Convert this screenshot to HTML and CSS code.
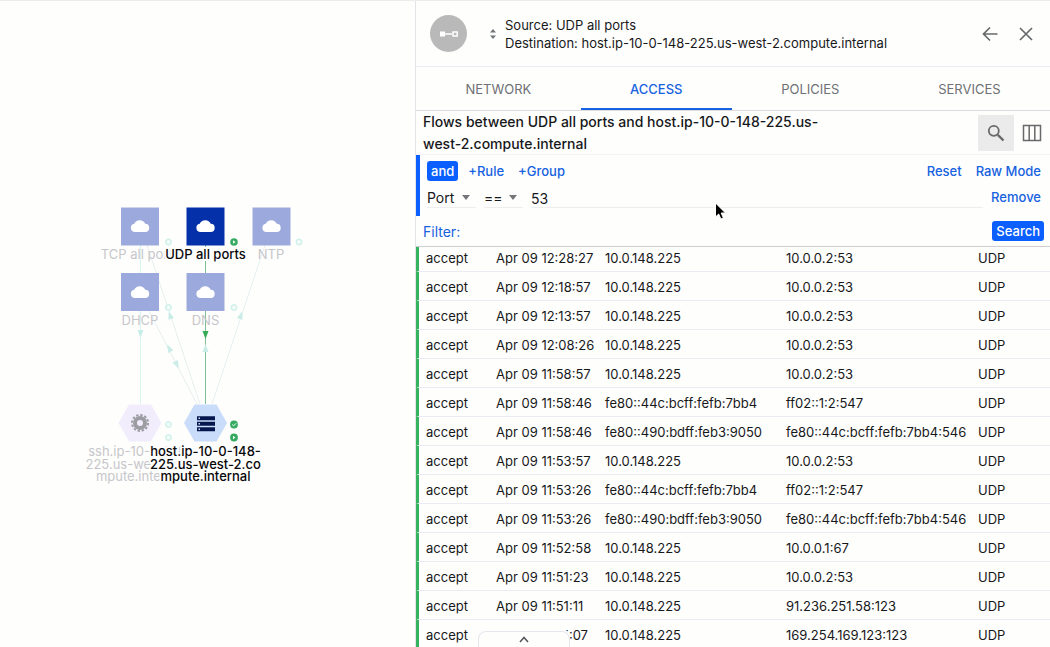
FILE: index.html
```
<!DOCTYPE html>
<html lang="en">
<head>
<meta charset="utf-8">
<title>Flows</title>
<link rel="stylesheet" href="styles.css">
</head>
<body>
<div class="app">
  <main class="canvas">
    <svg class="graph" role="img" aria-label="Service graph">
      <defs>
        <g id="cloud"><path d="M-5 6a4.200 4.200 0 0 1-.8-8.300A6 6 0 0 1 5.200-2.200 4.100 4.100 0 0 1 5 6z" fill="#fff"/></g>
        <path id="up" d="M0-4 3 4h-6z"/>
        <path id="down" d="M0 4 3-4h-6z"/>
        <circle id="ring" r="2.700"/>
      </defs>
      <g class="edges">
        <path d="M140.500 245V404" class="edge edge-teal"/>
        <path d="M147 245 200 404M149 311 197 404M265 245 212 404" class="edge"/>
        <path d="M205.500 245V404" class="edge edge-green"/>
      </g>
      <g class="arrows">
        <use href="#down" x="140.500" y="334"/>
        <use href="#up" transform="translate(170 315) rotate(-18)"/>
        <use href="#up" transform="translate(169 348) rotate(-27)"/>
        <use href="#down" transform="translate(177 365) rotate(-27)"/>
        <use href="#up" transform="translate(241 315) rotate(18)"/>
        <use href="#up" x="205.500" y="348"/>
      </g>
      <use href="#down" x="205.500" y="335" class="arrow-green"/>
      <g class="faded-box">
        <rect x="121" y="207.500" width="38" height="38"/>
        <rect x="252.500" y="207.500" width="38" height="38"/>
        <rect x="121" y="273" width="38" height="38"/>
        <rect x="186.500" y="273" width="38" height="38"/>
      </g>
      <rect x="186.500" y="207.500" width="38" height="38" class="active-box"/>
      <use href="#cloud" x="140" y="226"/>
      <use href="#cloud" x="205.500" y="226"/>
      <use href="#cloud" x="271.500" y="226"/>
      <use href="#cloud" x="140" y="292"/>
      <use href="#cloud" x="205.500" y="292"/>
      <path d="M118.500 423 129 404.500H151L161.500 423 151 441.500H129z" class="hex-faded"/>
      <path d="M184 423 194.500 404.500H216.500L227 423 216.500 441.500H194.500z" class="hex-active"/>
      <circle cx="140" cy="423" r="5" class="gear"/>
      <circle cx="140" cy="423" r="8" class="teeth"/>
      <path d="M197 416.300h18v4h-18zM197 421.800h18v4h-18zM197 427.300h18v4h-18z" fill="#06164e"/>
      <path d="M198.500 417.500h1.500v1.500h-1.500zM198.500 423h1.500v1.500h-1.500zM198.500 428.500h1.500v1.500h-1.500z" fill="#cfe0fb"/>
      <g class="rings">
        <use href="#ring" x="168.500" y="242"/><use href="#ring" x="299" y="242"/>
        <use href="#ring" x="168.500" y="307.500"/><use href="#ring" x="234" y="307.500"/>
        <use href="#ring" x="168.500" y="424.500"/><use href="#ring" x="168.500" y="437.500"/>
      </g>
      <g fill="#35ab62">
        <circle cx="234" cy="242" r="3.800"/><circle cx="234" cy="424.500" r="3.900"/><circle cx="234" cy="437.500" r="3.900"/>
      </g>
      <path d="M233 240.300v3.400l2.500-1.700zM233 435.800v3.400l2.500-1.700z" fill="#fff"/>
      <path d="M232.200 424.500l1.400 1.400 2.500-2.600" fill="none" stroke="#fff"/>
      <g class="label label-faded">
        <text x="140" y="259">TCP all ports</text>
        <text x="271" y="259">NTP</text>
        <text x="140" y="325">DHCP</text>
        <text x="205.500" y="325">DNS</text>
        <text><tspan x="140" y="456">ssh.ip-10-0-148-</tspan><tspan x="140" y="469">225.us-west-2.co</tspan><tspan x="140" y="481">mpute.internal</tspan></text>
      </g>
      <g class="label label-active">
        <text x="205.500" y="259">UDP all ports</text>
        <text><tspan x="205.500" y="456">host.ip-10-0-148-</tspan><tspan x="205.500" y="469">225.us-west-2.co</tspan><tspan x="205.500" y="481">mpute.internal</tspan></text>
      </g>
    </svg>
  </main>

  <aside class="panel">
    <header class="header">
      <span class="avatar">
        <svg width="20" height="8" viewBox="0 0 20 8"><path d="M1 1.500h5v5H1zM6 3.300h7v1.400H6z" fill="#fff"/><path d="M14 2h4.200v4H14z" fill="none" stroke="#fff" stroke-width="1.500"/></svg>
      </span>
      <button class="icon-btn swap" aria-label="Swap source and destination">
        <svg width="8" height="12" viewBox="0 0 8 12"><path d="M4 1 7 4.500H1zM4 11 1 7.500h6z" fill="#707479"/></svg>
      </button>
      <div class="endpoints">
        <div>Source: UDP all ports</div>
        <div>Destination: host.ip-10-0-148-225.us-west-2.compute.internal</div>
      </div>
      <button class="icon-btn" aria-label="Back">
        <svg width="16" height="16" viewBox="0 0 16 16"><path d="M15.500 8H1.500M8 1.500 1.500 8 8 14.500" class="stroke"/></svg>
      </button>
      <button class="icon-btn" aria-label="Close">
        <svg width="16" height="16" viewBox="0 0 16 16"><path d="M2 2 14 14M14 2 2 14" class="stroke"/></svg>
      </button>
    </header>

    <nav class="tabs" role="tablist">
      <button class="tab" role="tab">NETWORK</button>
      <button class="tab tab-on" role="tab" aria-selected="true">ACCESS</button>
      <button class="tab" role="tab">POLICIES</button>
      <button class="tab" role="tab">SERVICES</button>
    </nav>

    <section class="title-row">
      <h1 class="title">Flows between UDP all ports and host.ip-10-0-148-225.us-west-2.compute.internal</h1>
      <button class="icon-btn search-toggle" aria-label="Toggle search">
        <svg width="18" height="18" viewBox="0 0 18 18"><circle cx="6.800" cy="6.800" r="5" fill="none" stroke="#68696b" stroke-width="1.800"/><path d="M10.800 10.800 16.500 16.500" stroke="#68696b" stroke-width="2.400"/></svg>
      </button>
      <button class="icon-btn" aria-label="Columns">
        <svg width="20" height="18" viewBox="0 0 20 18"><path d="M1.500 1.500h17v15h-17zM7.200 1.500V16.500M12.800 1.500V16.500" fill="none" stroke="#68696b" stroke-width="1.500"/></svg>
      </button>
    </section>

    <form class="query" onsubmit="return false">
      <div class="rules">
        <div class="rule-line">
          <button class="solid" type="button">and</button>
          <button class="link" type="button">+Rule</button>
          <button class="link" type="button">+Group</button>
          <span class="spacer"></span>
          <button class="link" type="button">Reset</button>
          <button class="link" type="button">Raw Mode</button>
        </div>
        <div class="rule-line rule-fields">
          <span class="pick pick-field"><select aria-label="Field"><option>Port</option></select></span>
          <span class="pick pick-op"><select aria-label="Operator"><option>==</option></select></span>
          <input class="value" type="text" aria-label="Value" value="53">
          <button class="link" type="button">Remove</button>
        </div>
      </div>
      <div class="filter">
        <span class="filter-label">Filter:</span>
        <button class="solid" type="submit">Search</button>
      </div>
    </form>

    <div class="flows">
      <table class="flow-table">
        <colgroup><col class="c-act"><col class="c-time"><col class="c-src"><col class="c-dst"><col class="c-proto"></colgroup>
        <tbody>
          <tr><td>accept</td><td>Apr 09 12:28:27</td><td>10.0.148.225</td><td>10.0.0.2:53</td><td>UDP</td></tr>
          <tr><td>accept</td><td>Apr 09 12:18:57</td><td>10.0.148.225</td><td>10.0.0.2:53</td><td>UDP</td></tr>
          <tr><td>accept</td><td>Apr 09 12:13:57</td><td>10.0.148.225</td><td>10.0.0.2:53</td><td>UDP</td></tr>
          <tr><td>accept</td><td>Apr 09 12:08:26</td><td>10.0.148.225</td><td>10.0.0.2:53</td><td>UDP</td></tr>
          <tr><td>accept</td><td>Apr 09 11:58:57</td><td>10.0.148.225</td><td>10.0.0.2:53</td><td>UDP</td></tr>
          <tr><td>accept</td><td>Apr 09 11:58:46</td><td>fe80::44c:bcff:fefb:7bb4</td><td>ff02::1:2:547</td><td>UDP</td></tr>
          <tr><td>accept</td><td>Apr 09 11:58:46</td><td>fe80::490:bdff:feb3:9050</td><td>fe80::44c:bcff:fefb:7bb4:546</td><td>UDP</td></tr>
          <tr><td>accept</td><td>Apr 09 11:53:57</td><td>10.0.148.225</td><td>10.0.0.2:53</td><td>UDP</td></tr>
          <tr><td>accept</td><td>Apr 09 11:53:26</td><td>fe80::44c:bcff:fefb:7bb4</td><td>ff02::1:2:547</td><td>UDP</td></tr>
          <tr><td>accept</td><td>Apr 09 11:53:26</td><td>fe80::490:bdff:feb3:9050</td><td>fe80::44c:bcff:fefb:7bb4:546</td><td>UDP</td></tr>
          <tr><td>accept</td><td>Apr 09 11:52:58</td><td>10.0.148.225</td><td>10.0.0.1:67</td><td>UDP</td></tr>
          <tr><td>accept</td><td>Apr 09 11:51:23</td><td>10.0.148.225</td><td>10.0.0.2:53</td><td>UDP</td></tr>
          <tr><td>accept</td><td>Apr 09 11:51:11</td><td>10.0.148.225</td><td>91.236.251.58:123</td><td>UDP</td></tr>
          <tr><td>accept</td><td>Apr 09 11:51:07</td><td>10.0.148.225</td><td>169.254.169.123:123</td><td>UDP</td></tr>
        </tbody>
      </table>
    </div>
  </aside>

  <button class="drawer" aria-label="Open drawer">
    <svg width="10" height="7" viewBox="0 0 10 7"><path d="M1 6 5 1.500 9 6" fill="none" stroke="#55585c" stroke-width="1.600"/></svg>
  </button>
  <svg class="cursor" width="14" height="20" viewBox="0 0 14 20"><path d="M1.500 1v14l3.200-3 2.200 5 2.500-1-2.200-5h4.300z" fill="#000" stroke="#fff"/></svg>
</div>
</body>
</html>
```
FILE: styles.css
```
* { box-sizing: border-box; }
body {
  margin: 0;
  background: #fefefd;
  color: #17181a;
  font-family: Inter, "Liberation Sans", sans-serif;
  font-size: 13px;
}
button, input, select {
  margin: 0;
  padding: 0;
  border: 0;
  background: none;
  color: inherit;
  font: inherit;
}
svg { display: block; }

.app {
  position: relative;
  display: grid;
  grid-template-columns: 415fr 635fr;
  height: 100vh;
  overflow: hidden;
  border-top: 1px solid #ececec;
}

/* Graph */
.canvas { min-width: 0; margin-top: -1px; }
.graph { width: 100%; height: 100%; }
.edge { fill: none; stroke: #e6eff0; }
.edge-teal { stroke: #d9f3ef; }
.edge-green { stroke: #7dbf98; }
.arrows { fill: #c9ede6; }
.arrow-green { fill: #35ab55; }
.faded-box { fill: #9ca9dc; }
.active-box { fill: #0430aa; }
.hex-faded { fill: #f2edfc; }
.hex-active { fill: #c9dcf9; }
.gear { fill: none; stroke: #9c9ca3; stroke-width: 4; }
.teeth { fill: none; stroke: #9c9ca3; stroke-width: 2; stroke-dasharray: 2.400 1.790; }
.rings { fill: #f4fcfa; stroke: #d0f0ea; stroke-width: 1.500; }
.label { font-size: 13px; text-anchor: middle; }
.label-faded { fill: #c6c6ca; }
.label-active {
  fill: #08080a;
  font-weight: 500;
  stroke: #fefefd;
  stroke-width: 4px;
  stroke-linejoin: round;
  paint-order: stroke;
}

/* Panel */
.panel {
  display: flex;
  flex-direction: column;
  min-width: 0;
  min-height: 0;
  border-left: 1px solid #e4e4e8;
}
.header {
  display: flex;
  align-items: center;
  height: 66px;
  padding: 0 14px;
  border-bottom: 1px solid #ebebf5;
}
.avatar {
  display: grid;
  place-items: center;
  width: 37px;
  height: 37px;
  border-radius: 50%;
  background: #b9b9b9;
}
.icon-btn {
  display: grid;
  place-items: center;
  flex: none;
  width: 36px;
  height: 36px;
}
.swap { width: 12px; margin: 0 6px 0 20px; }
.endpoints { flex: 1; line-height: 18px; }
.stroke { fill: none; stroke: #68696b; stroke-width: 1.700; }
.header .icon-btn:last-child { margin-right: -8px; }

.tabs {
  display: flex;
  height: 44px;
  border-bottom: 1px solid #dcdce0;
}
.tab {
  flex: 1 1 auto;
  color: #6d7074;
}
.tab-on { color: #1762e0; font-weight: 500; box-shadow: inset 0 -2px 0 #1762e0; }

.title-row {
  display: flex;
  align-items: center;
  height: 44px;
  padding-left: 7px;
  border-bottom: 1px solid #f3f3f6;
}
.title {
  flex: 1;
  margin: 0;
  padding: 1px 140px 0 0;
  font-size: 14px;
  font-weight: 500;
  line-height: 22px;
}
.search-toggle { background: #ebebeb; }

.rules {
  height: 61px;
  padding: 6px 9px 0 7px;
  border-left: 4px solid #0b5fff;
}
.rule-line { display: flex; align-items: center; gap: 14px; }
.rule-fields { gap: 8px; margin-top: 5px; }
.solid {
  height: 20px;
  padding: 0 4px;
  border-radius: 3px;
  background: #0b5fff;
  color: #fff;
  font-weight: 500;
}
.rule-line .solid { margin-right: -4px; }
.link { color: #1762e0; font-weight: 500; }
.spacer { flex: 1; }
.pick {
  display: flex;
  align-items: center;
  height: 22px;
  padding-top: 2px;
  border-bottom: 1px solid #eeeeef;
}
.pick::after {
  content: "";
  margin-right: 6px;
  border: 4px solid transparent;
  border-top: 5px solid #747679;
  border-bottom: 0;
}
.pick select {
  flex: 1;
  min-width: 0;
  appearance: none;
  font-size: 14px;
}
.pick-field { width: 49px; }
.pick-op { width: 39px; }
.value {
  flex: 1;
  min-width: 0;
  height: 22px;
  padding-top: 3px;
  border-bottom: 1px solid #eeeeef;
  font-size: 14px;
}
.filter {
  display: flex;
  align-items: center;
  justify-content: space-between;
  height: 31px;
  padding: 0 6px 0 7px;
  border-bottom: 1px solid #cfcfd1;
}
.filter-label { color: #1762e0; font-size: 14px; }

/* Flow list, scrolled slightly past its first row's top edge */
.flows { flex: 1; min-height: 0; overflow: hidden; }
.flow-table {
  width: 100%;
  margin-top: -4px;
  table-layout: fixed;
  border-collapse: separate;
  border-spacing: 0;
}
.flow-table td {
  height: 29px;
  padding: 1px 0 0;
  border-bottom: 1px solid #ebebf4;
  white-space: nowrap;
}
.flow-table td:first-child {
  padding-left: 7px;
  border-left: 3px solid #35b35e;
}
.c-act { width: 80px; }
.c-time { width: 109px; }
.c-src { width: 181px; }
.c-dst { width: 192px; }

.drawer {
  position: absolute;
  left: 478px;
  bottom: 0;
  display: grid;
  place-items: center;
  width: 92px;
  height: 16px;
  border: 1px solid #e6e6ee;
  border-bottom: 0;
  border-radius: 8px 8px 0 0;
  background: #fefefd;
  box-shadow: 0 -2px 0 #fefefd;
}
.cursor { position: absolute; left: 714px; top: 201px; }
```
